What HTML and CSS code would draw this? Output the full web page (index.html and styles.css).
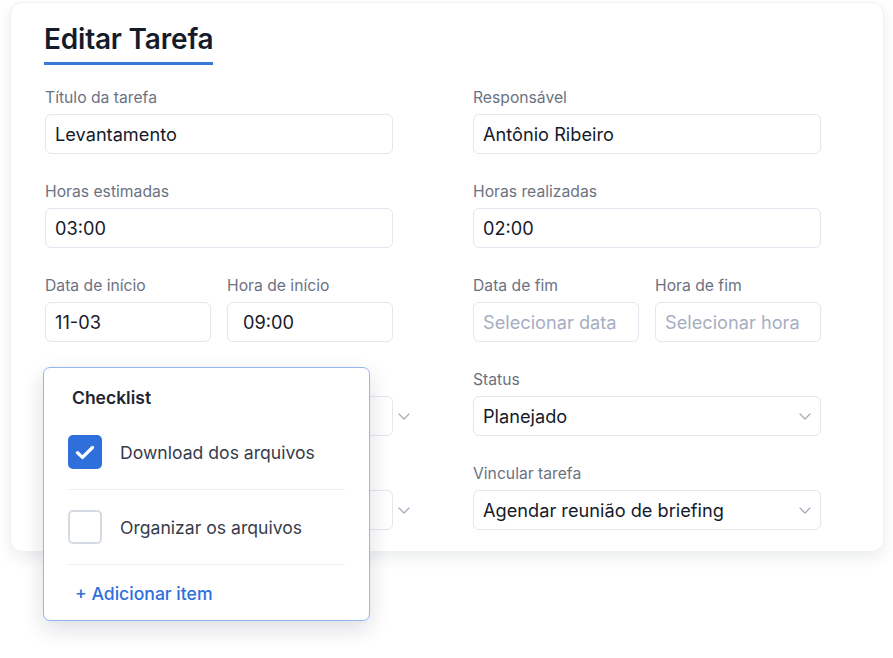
FILE: index.html
```html
<!DOCTYPE html>
<html lang="pt-BR">
<head>
    <meta charset="UTF-8">
    <meta name="viewport" content="width=device-width, initial-scale=1.0">
    <title>Editar Tarefa</title>
    <link rel="stylesheet" href="styles.css">
</head>
<body>
    <div class="card">
        <h1 class="title">Editar Tarefa</h1>

        <div class="grid">
            <div class="field">
                <label>Título da tarefa</label>
                <input type="text" class="box" value="Levantamento">
            </div>
            <div class="field">
                <label>Responsável</label>
                <input type="text" class="box" value="Antônio Ribeiro">
            </div>

            <div class="field">
                <label>Horas estimadas</label>
                <input type="text" class="box" value="03:00">
            </div>
            <div class="field">
                <label>Horas realizadas</label>
                <input type="text" class="box" value="02:00">
            </div>

            <div class="pair">
                <div class="field">
                    <label>Data de início</label>
                    <input type="text" class="box" value="11-03">
                </div>
                <div class="field">
                    <label>Hora de início</label>
                    <input type="text" class="box wide-pad" value="09:00">
                </div>
            </div>
            <div class="pair">
                <div class="field">
                    <label>Data de fim</label>
                    <input type="text" class="box" placeholder="Selecionar data">
                </div>
                <div class="field">
                    <label>Hora de fim</label>
                    <input type="text" class="box" placeholder="Selecionar hora">
                </div>
            </div>

            <div class="field">
                <label>Prioridade</label>
                <div class="box select select-out">
                    <span>Média</span>
                    <svg class="chev" width="12" height="7" viewBox="0 0 12 7"><path d="M1 1l5 5 5-5" fill="none" stroke="#a3a9b6" stroke-width="1.2" stroke-linecap="round" stroke-linejoin="round"/></svg>
                </div>
            </div>
            <div class="field">
                <label>Status</label>
                <div class="box select">
                    <span>Planejado</span>
                    <svg class="chev" width="12" height="7" viewBox="0 0 12 7"><path d="M1 1l5 5 5-5" fill="none" stroke="#a3a9b6" stroke-width="1.2" stroke-linecap="round" stroke-linejoin="round"/></svg>
                </div>
            </div>

            <div class="field">
                <label>Etapa</label>
                <div class="box select select-out">
                    <span>Briefing</span>
                    <svg class="chev" width="12" height="7" viewBox="0 0 12 7"><path d="M1 1l5 5 5-5" fill="none" stroke="#a3a9b6" stroke-width="1.2" stroke-linecap="round" stroke-linejoin="round"/></svg>
                </div>
            </div>
            <div class="field">
                <label>Vincular tarefa</label>
                <div class="box select">
                    <span>Agendar reunião de briefing</span>
                    <svg class="chev" width="12" height="7" viewBox="0 0 12 7"><path d="M1 1l5 5 5-5" fill="none" stroke="#a3a9b6" stroke-width="1.2" stroke-linecap="round" stroke-linejoin="round"/></svg>
                </div>
            </div>
        </div>

        <div class="checklist">
            <h2>Checklist</h2>
            <div class="item">
                <span class="check done">
                    <svg width="20" height="15" viewBox="0 0 20 15"><path d="M2.5 7.8l5 4.6L17.5 2.5" fill="none" stroke="#fff" stroke-width="3.3" stroke-linecap="round" stroke-linejoin="round"/></svg>
                </span>
                <span>Download dos arquivos</span>
            </div>
            <div class="item">
                <span class="check"></span>
                <span>Organizar os arquivos</span>
            </div>
            <a class="add" href="#">+ Adicionar item</a>
        </div>
    </div>
</body>
</html>
```

FILE: styles.css
```css
html, body {
    height: 100%;
}
body {
    margin: 0;
    padding: 2px 0 0 10px;
    box-sizing: border-box;
    min-height: 658px;
    font-family: 'Inter', 'Noto Sans', sans-serif;
    background: #fff;
    color: #111827;
}
.card {
    position: relative;
    width: 874px;
    height: 550px;
    box-sizing: border-box;
    padding: 19px 63px 0 34px;
    background: #fff;
    border: 1px solid #eef0f4;
    border-radius: 12px;
    box-shadow: 0 6px 16px rgba(17, 24, 39, 0.08);
}
.title {
    display: inline-block;
    margin: 0 0 0 -1px;
    padding-bottom: 6px;
    font-size: 28px;
    line-height: 34px;
    font-weight: 600;
    color: #151b2b;
    border-bottom: 3px solid #3a78d8;
    letter-spacing: -0.2px;
}
.grid {
    display: grid;
    grid-template-columns: 348px 348px;
    column-gap: 80px;
    row-gap: 28px;
    margin-top: 23px;
}
.pair {
    display: grid;
    grid-template-columns: 1fr 1fr;
    column-gap: 16px;
}
.field label {
    display: block;
    font-size: 15.7px;
    line-height: 20px;
    color: #6b7282;
    margin-bottom: 6px;
}
.box {
    display: block;
    width: 100%;
    height: 40px;
    box-sizing: border-box;
    padding: 0 9px;
    font-family: inherit;
    font-size: 18.2px;
    color: #151b2b;
    background: #fff;
    border: 1px solid #e3e6ee;
    border-radius: 6px;
    outline: none;
}
.box::placeholder {
    color: #a6aec2;
}
.wide-pad {
    padding-left: 15px;
}
.select {
    position: relative;
    display: flex;
    align-items: center;
}
.chev {
    position: absolute;
    right: 9px;
    top: 16px;
}
.select-out .chev {
    right: -18px;
}
.checklist {
    position: absolute;
    left: 32px;
    top: 364px;
    width: 327px;
    box-sizing: border-box;
    padding: 18px 24px 14px;
    background: #fff;
    border: 1.5px solid #94b6ee;
    border-radius: 7px;
    box-shadow: 0 8px 22px rgba(17, 24, 39, 0.14);
    z-index: 2;
}
.checklist h2 {
    margin: 0 0 5px 4px;
    font-size: 17.5px;
    line-height: 24px;
    font-weight: 600;
    color: #1f2533;
}
.item {
    display: flex;
    align-items: center;
    gap: 18px;
    padding: 20px 0;
    border-bottom: 1px solid #eef0f4;
    font-size: 17.6px;
    color: #363c4a;
}
.check {
    display: flex;
    align-items: center;
    justify-content: center;
    flex-shrink: 0;
    width: 34px;
    height: 34px;
    box-sizing: border-box;
    border: 2px solid #d6dae3;
    border-radius: 5px;
    background: #fff;
}
.check.done {
    border: none;
    background: #2e6fdc;
}
.add {
    display: block;
    padding: 17px 0 0 7px;
    font-size: 17.6px;
    line-height: 24px;
    font-weight: 500;
    color: #2e6fdc;
    text-decoration: none;
}
```
